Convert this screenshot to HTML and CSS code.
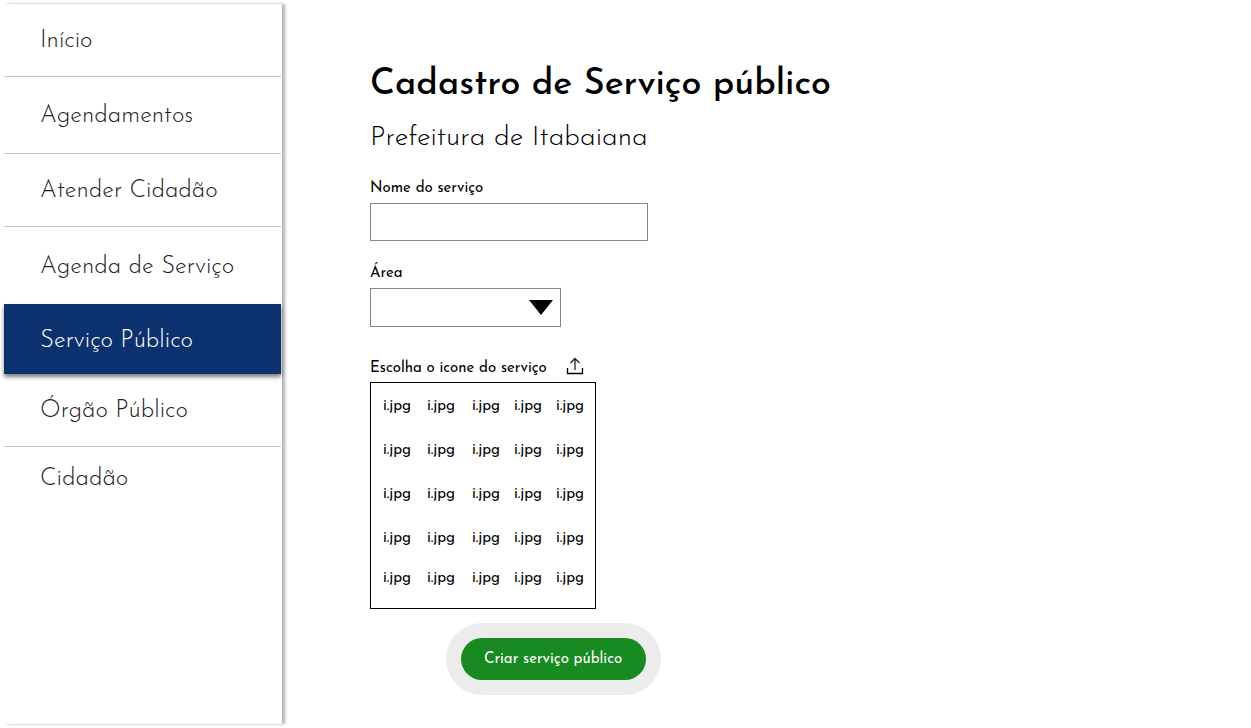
FILE: index.html
```html
<!DOCTYPE html>
<html lang="pt-BR">
<head>
  <meta charset="utf-8">
  <meta name="viewport" content="width=device-width, initial-scale=1">
  <title>Cadastro de Serviço público</title>
  <link rel="stylesheet" href="styles.css">
</head>
<body>
  <div class="layout">
    <nav class="sidebar" aria-label="Menu principal">
      <a class="menu-item" href="#inicio">Início</a>
      <a class="menu-item tall" href="#agendamentos">Agendamentos</a>
      <a class="menu-item" href="#atender">Atender Cidadão</a>
      <a class="menu-item tall plain" href="#agenda">Agenda de Serviço</a>
      <a class="menu-item active" href="#servico" aria-current="page">Serviço Público</a>
      <a class="menu-item" href="#orgao">Órgão Público</a>
      <a class="menu-item short plain" href="#cidadao">Cidadão</a>
    </nav>
    <main class="content">
      <h1 class="title">Cadastro de Serviço público</h1>
      <p class="subtitle">Prefeitura de Itabaiana</p>
      <form class="form">
        <div class="field">
          <label class="label" for="nome">Nome do serviço</label>
          <input class="text-box" id="nome" type="text">
        </div>
        <div class="field">
          <label class="label" for="area">Área</label>
          <div class="select-wrap">
            <select class="select" id="area"><option></option></select>
            <svg class="arrow" viewBox="0 0 24 15" width="24" height="15" aria-hidden="true"><path d="M0 0H24L12 15Z"/></svg>
          </div>
        </div>
        <div class="picker">
          <div class="picker-head">
            <span class="label" id="icones">Escolha o icone do serviço</span>
            <button class="upload" type="button" aria-label="Enviar icone">
              <svg viewBox="0 0 18 18" width="18" height="18" aria-hidden="true">
                <path class="tray" d="M1.5 11V16.5H16.5V11"/>
                <path class="up" d="M9 13V2M4.5 6L9 1.5L13.5 6"/>
              </svg>
            </button>
          </div>
          <div class="icon-grid" role="group" aria-labelledby="icones">
            <button class="icon" type="button">i.jpg</button>
            <button class="icon" type="button">i.jpg</button>
            <button class="icon" type="button">i.jpg</button>
            <button class="icon" type="button">i.jpg</button>
            <button class="icon" type="button">i.jpg</button>
            <button class="icon" type="button">i.jpg</button>
            <button class="icon" type="button">i.jpg</button>
            <button class="icon" type="button">i.jpg</button>
            <button class="icon" type="button">i.jpg</button>
            <button class="icon" type="button">i.jpg</button>
            <button class="icon" type="button">i.jpg</button>
            <button class="icon" type="button">i.jpg</button>
            <button class="icon" type="button">i.jpg</button>
            <button class="icon" type="button">i.jpg</button>
            <button class="icon" type="button">i.jpg</button>
            <button class="icon" type="button">i.jpg</button>
            <button class="icon" type="button">i.jpg</button>
            <button class="icon" type="button">i.jpg</button>
            <button class="icon" type="button">i.jpg</button>
            <button class="icon" type="button">i.jpg</button>
            <button class="icon" type="button">i.jpg</button>
            <button class="icon" type="button">i.jpg</button>
            <button class="icon" type="button">i.jpg</button>
            <button class="icon" type="button">i.jpg</button>
            <button class="icon" type="button">i.jpg</button>
          </div>
        </div>
        <div class="submit-ring">
          <button class="submit" type="submit">Criar serviço público</button>
        </div>
      </form>
    </main>
  </div>
</body>
</html>
```
FILE: styles.css
```css
* {
  box-sizing: border-box;
}

body {
  margin: 0;
  background: #fff;
  color: #000;
  font-family: "Josefin Sans", Lato, sans-serif;
  font-size: 15px;
}

button,
input,
select {
  margin: 0;
  font: inherit;
  color: inherit;
}

.layout {
  display: flex;
  min-height: 100vh;
  padding: 4px;
}

.sidebar {
  flex: none;
  width: 278px;
  background: #fff;
  box-shadow: 3px 0 3px rgba(0, 0, 0, 0.3);
}

.menu-item {
  display: flex;
  align-items: center;
  min-height: 73px;
  margin-right: 1px;
  padding: 2px 36px 0;
  border-bottom: 1px solid #c4c4c4;
  color: #222;
  font-size: 24px;
  font-weight: 300;
  line-height: 32px;
  text-decoration: none;
}

.tall {
  min-height: 77px;
}

.short {
  min-height: 62px;
}

.plain {
  border-bottom: 0;
}

.active {
  min-height: 70px;
  padding-top: 4px;
  border-bottom: 0;
  background: #0b316f;
  box-shadow: 0 3px 4px rgba(0, 0, 0, 0.5);
  color: #fff;
}

.content {
  flex: 1;
  padding: 57px 40px 28px 88px;
}

.title {
  margin: 0;
  font-size: 36px;
  font-weight: 500;
  line-height: 48px;
}

.subtitle {
  margin: 9px 0 19px;
  font-size: 28px;
  font-weight: 300;
  line-height: 40px;
}

.form {
  display: flex;
  flex-direction: column;
  align-items: flex-start;
}

.label {
  font-weight: 400;
  line-height: 24px;
}

.field {
  display: flex;
  flex-direction: column;
  align-items: flex-start;
  gap: 2px;
  margin-bottom: 21px;
}

.text-box,
.select {
  width: 278px;
  height: 38px;
  padding: 0 12px;
  border: 1px solid #858585;
  border-radius: 0;
  background: #fff;
}

.select-wrap {
  position: relative;
}

.select {
  display: block;
  width: 191px;
  height: 39px;
  appearance: none;
}

.arrow {
  position: absolute;
  top: 12px;
  right: 8px;
  pointer-events: none;
}

.picker {
  margin-top: 9px;
}

.picker-head {
  display: flex;
  align-items: flex-start;
  gap: 19px;
  padding-bottom: 1px;
}

.upload {
  display: flex;
  padding: 0;
  border: 0;
  background: none;
}

.upload path {
  fill: none;
  stroke: #222;
  stroke-width: 1.3;
}

.upload .tray {
  stroke: #000;
}

.icon-grid {
  display: grid;
  grid-template-columns: 44px 45px 42px 42px 27px;
  grid-template-rows: repeat(4, 44px) 36px;
  padding: 2px 12px 11px;
  border: 1px solid #000;
}

.icon {
  justify-self: start;
  padding: 0;
  border: 0;
  background: none;
  line-height: 20px;
}

.submit-ring {
  margin: 14px 0 0 76px;
  padding: 15px;
  border-radius: 36px;
  background: #ececec;
}

.submit {
  height: 42px;
  padding: 0 24px 0 23px;
  border: 0;
  border-radius: 21px;
  background: #178a22;
  color: #fff;
}
```
